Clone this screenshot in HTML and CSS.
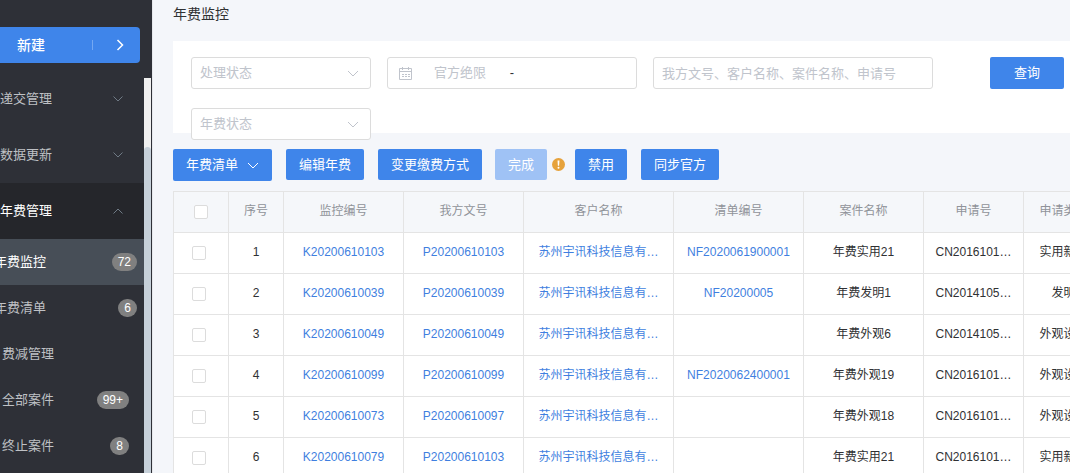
FILE: index.html
```html
<!DOCTYPE html>
<html lang="zh-CN">
<head>
<meta charset="utf-8">
<title>年费监控</title>
<link rel="stylesheet" href="styles.css">
</head>
<body>
<div class="app">
  <aside class="sidebar">
    <button class="create" type="button">
      <span class="create-label">新建</span>
      <span class="create-more"><svg width="8" height="12" viewBox="0 0 8 12"><path d="M1.5 1 6.5 6l-5 5"/></svg></span>
    </button>
    <div class="menu-scroll">
      <nav class="menu">
        <a class="group" href="#">递交管理<svg class="chevron" width="10" height="6" viewBox="0 0 10 6"><path d="M.5.5 5 5 9.5.5"/></svg></a>
        <a class="group" href="#">数据更新<svg class="chevron" width="10" height="6" viewBox="0 0 10 6"><path d="M.5.5 5 5 9.5.5"/></svg></a>
        <a class="group open" href="#">年费管理<svg class="chevron" width="10" height="6" viewBox="0 0 10 6"><path d="M.5 5.5 5 1l4.500 4.500"/></svg></a>
        <a class="item outer active" href="#">年费监控<span class="badge">72</span></a>
        <a class="item outer" href="#">年费清单<span class="badge">6</span></a>
        <a class="item" href="#">费减管理</a>
        <a class="item" href="#">全部案件<span class="badge">99+</span></a>
        <a class="item" href="#">终止案件<span class="badge">8</span></a>
      </nav>
      <div class="track"><div class="thumb"></div></div>
    </div>
  </aside>
  <main class="main">
    <h1 class="title">年费监控</h1>
    <form class="filters">
      <div class="filter-row">
        <div class="select-box">
          <select aria-label="处理状态"><option>处理状态</option></select>
          <svg class="chevron" width="12" height="7" viewBox="0 0 12 7"><path d="M1 1l5 5 5-5"/></svg>
        </div>
        <div class="date-range">
          <svg class="calendar" width="13" height="13" viewBox="0 0 13 13"><path d="M.5 1.500h12v11H.5zM.5 4.500h12M3.500 0v3M9.500 0v3M3 7.500h2M6 7.500h2M9 7.500h2M3 9.500h2M6 9.500h2M9 9.500h2"/></svg>
          <input class="date-from" type="text" aria-label="官方绝限开始" placeholder="官方绝限">
          <span class="dash">-</span>
          <input class="date-to" type="text" aria-label="官方绝限结束">
        </div>
        <input class="keyword" type="text" aria-label="关键字" placeholder="我方文号、客户名称、案件名称、申请号">
        <button class="btn query" type="button">查询</button>
      </div>
      <div class="filter-row">
        <div class="select-box">
          <select aria-label="年费状态"><option>年费状态</option></select>
          <svg class="chevron" width="12" height="7" viewBox="0 0 12 7"><path d="M1 1l5 5 5-5"/></svg>
        </div>
      </div>
    </form>
    <div class="toolbar">
      <button class="btn tall" type="button">年费清单<svg class="chevron" width="12" height="7" viewBox="0 0 12 7"><path d="M1 1l5 5 5-5"/></svg></button>
      <button class="btn" type="button">编辑年费</button>
      <button class="btn" type="button">变更缴费方式</button>
      <div class="with-hint">
        <button class="btn" type="button" disabled>完成</button>
        <svg width="13" height="13" viewBox="0 0 13 13"><circle cx="6.500" cy="6.500" r="6.500" fill="#e6a23c"/><path d="M5.500 2.500h2L7.100 7.700H5.900z" fill="#fff"/><circle cx="6.500" cy="9.700" r="1" fill="#fff"/></svg>
      </div>
      <button class="btn" type="button">禁用</button>
      <button class="btn" type="button">同步官方</button>
    </div>
    <div class="table-wrap">
      <table class="grid">
        <colgroup><col class="w55"><col class="w55"><col class="w120"><col class="w120"><col class="w150"><col class="w130"><col class="w120"><col class="w100"><col class="w80"></colgroup>
        <thead>
          <tr><th><input type="checkbox" aria-label="全选"></th><th>序号</th><th>监控编号</th><th>我方文号</th><th>客户名称</th><th>清单编号</th><th>案件名称</th><th>申请号</th><th>申请类型</th></tr>
        </thead>
        <tbody>
          <tr><td><input type="checkbox" aria-label="选择 1"></td><td>1</td><td><a href="#">K20200610103</a></td><td><a href="#">P20200610103</a></td><td><a href="#">苏州宇讯科技信息有…</a></td><td><a href="#">NF2020061900001</a></td><td>年费实用21</td><td>CN2016101…</td><td>实用新型</td></tr>
          <tr><td><input type="checkbox" aria-label="选择 2"></td><td>2</td><td><a href="#">K20200610039</a></td><td><a href="#">P20200610039</a></td><td><a href="#">苏州宇讯科技信息有…</a></td><td><a href="#">NF20200005</a></td><td>年费发明1</td><td>CN2014105…</td><td>发明</td></tr>
          <tr><td><input type="checkbox" aria-label="选择 3"></td><td>3</td><td><a href="#">K20200610049</a></td><td><a href="#">P20200610049</a></td><td><a href="#">苏州宇讯科技信息有…</a></td><td></td><td>年费外观6</td><td>CN2014105…</td><td>外观设计</td></tr>
          <tr><td><input type="checkbox" aria-label="选择 4"></td><td>4</td><td><a href="#">K20200610099</a></td><td><a href="#">P20200610099</a></td><td><a href="#">苏州宇讯科技信息有…</a></td><td><a href="#">NF2020062400001</a></td><td>年费外观19</td><td>CN2016101…</td><td>外观设计</td></tr>
          <tr><td><input type="checkbox" aria-label="选择 5"></td><td>5</td><td><a href="#">K20200610073</a></td><td><a href="#">P20200610097</a></td><td><a href="#">苏州宇讯科技信息有…</a></td><td></td><td>年费外观18</td><td>CN2016101…</td><td>外观设计</td></tr>
          <tr><td><input type="checkbox" aria-label="选择 6"></td><td>6</td><td><a href="#">K20200610079</a></td><td><a href="#">P20200610103</a></td><td><a href="#">苏州宇讯科技信息有…</a></td><td></td><td>年费实用21</td><td>CN2016101…</td><td>实用新型</td></tr>
        </tbody>
      </table>
    </div>
  </main>
</div>
</body>
</html>
```

FILE: styles.css
```css
* { box-sizing: border-box; }

body {
  margin: 0;
  font: 13px/20px "Liberation Sans", "Noto Sans CJK SC", sans-serif;
  color: #303133;
  background: #f4f6fa;
}

a { text-decoration: none; }

button, input, select { font: inherit; }

svg { flex: none; }

.app {
  display: flex;
  height: 100vh;
  overflow: hidden;
}

/* Sidebar */
.sidebar {
  display: flex;
  flex: none;
  flex-direction: column;
  width: 152px;
  padding-top: 27px;
  background: #2e3037;
}

.create {
  display: flex;
  flex: none;
  align-items: center;
  height: 36px;
  margin: 0 12px 15px 0;
  padding: 0 0 0 17px;
  border: 0;
  border-radius: 0 4px 4px 0;
  color: #fff;
  background: #3f85ea;
  font-size: 14px;
  font-weight: 500;
}

.create-more {
  display: flex;
  align-items: center;
  justify-content: center;
  width: 48px;
  height: 10px;
  margin-left: auto;
  padding-left: 7px;
  border-left: 1px solid #74a8f2;
}

.create-more path { fill: none; stroke: #fff; stroke-width: 1.5; }

.menu-scroll {
  display: flex;
  flex: 1;
  min-height: 0;
  padding-right: 1px;
}

.menu { flex: 1; overflow: hidden; margin-top: -7px; }

.track { width: 7px; padding-top: 69px; background: #f0f0f0; }

.thumb { height: 100%; border-radius: 4px 4px 0 0; background: #c6d0d9; }

.group, .item {
  display: flex;
  align-items: center;
  color: #bfc1c5;
}

.group { height: 56px; padding-right: 21px; }

.group .chevron { margin-left: auto; }

.group path { fill: none; stroke: #6f7a85; }

.open { color: #fff; background: #25262b; }

.item { height: 46px; padding: 0 15px 0 2px; }

.outer { margin-left: -8px; padding-right: 7px; }

.active { color: #fff; background: #474e57; }

.badge {
  height: 18px;
  margin-left: auto;
  padding: 0 6px;
  border-radius: 9px;
  color: #fff;
  background: #808080;
  font-size: 12px;
  line-height: 18px;
}

/* Content */
.main {
  flex: 1;
  min-width: 0;
  padding: 4px 0 0 20px;
  border-left: 1px solid #e6e8ec;
}

.title { margin: 0 0 17px; font-size: 14px; font-weight: 400; line-height: 20px; }

.filters {
  display: flex;
  flex-direction: column;
  gap: 19px;
  height: 92px;
  margin-bottom: 16px;
  padding: 16px 6px 0 18px;
  background: #fff;
}

.filter-row { display: flex; gap: 16px; }

.select-box, .date-range, .keyword {
  height: 32px;
  border: 1px solid #dcdcdc;
  border-radius: 3px;
  background: #fff;
}

.select-box { display: grid; align-items: center; flex: none; width: 180px; }

.select-box select {
  grid-area: 1 / 1;
  width: 100%;
  height: 30px;
  padding: 0 30px 0 8px;
  border: 0;
  appearance: none;
  color: #c0c4cc;
  background: transparent;
}

.select-box .chevron {
  grid-area: 1 / 1;
  justify-self: end;
  margin-right: 11px;
  pointer-events: none;
}

.select-box path, .calendar path { fill: none; stroke: #c0c4cc; }

.date-range {
  display: flex;
  align-items: center;
  width: 250px;
  padding: 0 11px;
}

.date-range input {
  min-width: 0;
  padding: 0;
  border: 0;
  text-align: center;
  background: transparent;
}

.date-from { width: 94px; margin-left: 1px; }

.date-to { flex: 1; }

.dash { width: 10px; text-align: center; }

.keyword { width: 280px; padding: 0 8px; }

::placeholder { color: #c0c4cc; opacity: 1; }

.btn {
  display: inline-flex;
  align-items: center;
  height: 31px;
  padding: 0 13px;
  border: 0;
  border-radius: 2px;
  color: #fff;
  background: #3f85ea;
  white-space: nowrap;
}

.btn:disabled { background: #9fc2f5; }

.btn .chevron { margin-left: 9px; }

.btn path { fill: none; stroke: #fff; }

.query { height: 32px; margin-left: auto; padding: 0 24px; }

.tall { height: 32px; }

.toolbar {
  display: flex;
  align-items: flex-start;
  gap: 14px;
  margin-bottom: 10px;
}

.with-hint {
  display: flex;
  align-items: center;
  gap: 5px;
  margin: 0 -4px 0 -1px;
}

/* Table */
.table-wrap { overflow: hidden; }

.grid {
  width: 931px;
  border-collapse: collapse;
  table-layout: fixed;
  font-size: 12px;
  text-align: center;
  background: #fff;
}

.w55 { width: 55px; }
.w80 { width: 80px; }
.w100 { width: 100px; }
.w120 { width: 120px; }
.w130 { width: 130px; }
.w150 { width: 150px; }

.grid th, .grid td {
  height: 41px;
  padding: 0 0 2px;
  border: 1px solid #e4e4e4;
  line-height: 20px;
  white-space: nowrap;
}

.grid th { color: #909399; background: #f5f7fa; font-weight: 400; }

.grid a { color: #3f7fe0; }

.grid input {
  display: block;
  width: 14px;
  height: 14px;
  margin: 2px auto 0 18px;
  border: 1px solid #dcdcdc;
  border-radius: 2px;
  appearance: none;
  background: #fff;
}

.grid th input { margin-left: 20px; }
```
